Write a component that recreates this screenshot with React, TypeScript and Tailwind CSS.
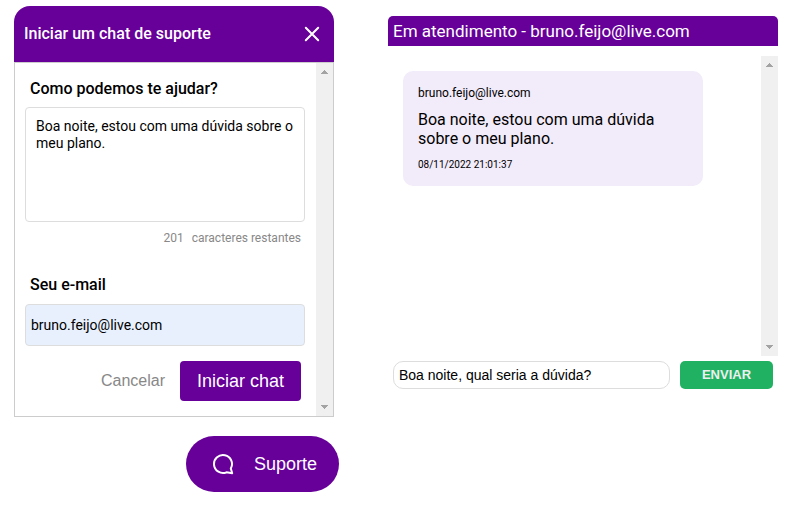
import React, { useState } from "react";

function ScrollTrack() {
  return (
    <div
      aria-hidden="true"
      className="flex w-[17px] shrink-0 flex-col items-center justify-between bg-[#f0f0f0] py-[7px]"
    >
      <svg width="7" height="4" viewBox="0 0 7 4" fill="#a3a3a3" shapeRendering="crispEdges">
        <path d="M3 0h1v1h1v1h1v1h1v1H0V3h1V2h1V1h1z" />
      </svg>
      <svg width="7" height="4" viewBox="0 0 7 4" fill="#a3a3a3" shapeRendering="crispEdges">
        <path d="M0 0h7v1H6v1H5v1H4v1H3V3H2V2H1V1H0z" />
      </svg>
    </div>
  );
}

function SupportForm() {
  const [message, setMessage] = useState("Boa noite, estou com uma dúvida sobre o meu plano.");
  const [email, setEmail] = useState("bruno.feijo@live.com");

  return (
    <section className="w-80">
      <header className="flex h-14 items-center justify-between rounded-t-2xl bg-[#660099] pr-[14px] pl-[10px] text-white">
        <h2 className="text-[16px] font-medium">Iniciar um chat de suporte</h2>
        <button type="button" aria-label="Fechar">
          <svg width="16" height="16" viewBox="0 0 16 16" fill="none" stroke="currentColor" strokeWidth="2" strokeLinecap="round">
            <path d="M1.8 1.8l12.4 12.4M14.2 1.8L1.8 14.2" />
          </svg>
        </button>
      </header>
      <form className="flex border border-[#cccccc]" onSubmit={(e) => e.preventDefault()}>
        <div className="flex flex-1 flex-col pt-4 pr-[11px] pb-[15px] pl-[10px]">
          <label htmlFor="question" className="pl-[5px] text-[16px] leading-5 font-medium">
            Como podemos te ajudar?
          </label>
          <textarea
            id="question"
            value={message}
            onChange={(e) => setMessage(e.target.value)}
            className="mt-2 h-[115px] resize-none rounded border border-[#dddddd] px-[10px] py-[10px] text-[14px] leading-[17px]"
          />
          <p className="mt-2 flex justify-end gap-2 pr-1 text-[12px] leading-4 text-[#888888]">
            <span>201</span>
            <span>caracteres restantes</span>
          </p>
          <label htmlFor="email" className="mt-[29px] pl-[5px] text-[16px] leading-5 font-medium">
            Seu e-mail
          </label>
          <input
            id="email"
            type="email"
            value={email}
            onChange={(e) => setEmail(e.target.value)}
            className="mt-[9px] h-[42px] rounded border border-[#dddddd] bg-[#e8f0fe] px-[5px] text-[14px]"
          />
          <div className="mt-[15px] flex justify-end gap-[15px] pr-1 font-['Liberation_Sans',Arial,sans-serif]">
            <button type="button" className="text-[16px] text-[#888888]">
              Cancelar
            </button>
            <button type="submit" className="h-10 w-[121px] rounded bg-[#660099] text-[18px] text-white">
              Iniciar chat
            </button>
          </div>
        </div>
        <ScrollTrack />
      </form>
    </section>
  );
}

function SupportButton() {
  return (
    <button
      type="button"
      className="flex h-14 items-center gap-5 rounded-full bg-[#660099] pr-[22px] pl-[26px] font-['Liberation_Sans',Arial,sans-serif] text-[18px] text-white"
    >
      <svg width="22" height="22" viewBox="0 0 22 22" fill="none" stroke="currentColor" strokeWidth="2" strokeLinejoin="round">
        <path d="M18.8 15.5A9 9 0 1 0 14.5 19.3L20.2 20.2Z" />
      </svg>
      Suporte
    </button>
  );
}

function Conversation() {
  const [reply, setReply] = useState("Boa noite, qual seria a dúvida?");

  return (
    <section className="min-w-0 flex-1">
      <header className="rounded-t-[5px] bg-[#660099] px-[5px] text-white">
        <h2 className="text-[17px] leading-[30px]">Em atendimento - bruno.feijo@live.com</h2>
      </header>
      <div className="mt-[10px] flex h-[300px] justify-between">
        <div className="p-[15px]">
          <article className="w-[300px] rounded-[10px] bg-[#f2ebfa] p-[15px]">
            <p className="text-[12px] leading-[14px]">bruno.feijo@live.com</p>
            <p className="mt-[10px] text-[16px] leading-[19px]">
              Boa noite, estou com uma dúvida sobre o meu plano.
            </p>
            <time className="mt-[10px] block text-[10px] leading-[13px]">08/11/2022 21:01:37</time>
          </article>
        </div>
        <ScrollTrack />
      </div>
      <form
        className="mt-[5px] flex gap-[10px] px-[5px] font-['Liberation_Sans',Arial,sans-serif]"
        onSubmit={(e) => e.preventDefault()}
      >
        <input
          type="text"
          aria-label="Mensagem"
          value={reply}
          onChange={(e) => setReply(e.target.value)}
          className="h-7 min-w-0 flex-1 rounded-[10px] border border-[#dddddd] px-[5px] text-[14px]"
        />
        <button type="submit" className="h-7 w-[93px] rounded-[5px] bg-[#20b262] text-[13px] font-bold text-[#eeeeee]">
          ENVIAR
        </button>
      </form>
    </section>
  );
}

export default function App() {
  return (
    <main className="flex items-start bg-white pt-[6px] pr-8 pl-[14px] font-[Roboto,sans-serif] text-black">
      <div className="flex w-[325px] shrink-0 flex-col gap-[19px]">
        <SupportForm />
        <div className="flex justify-end">
          <SupportButton />
        </div>
      </div>
      <div className="flex min-w-0 flex-1 pt-[10px] pl-[49px]">
        <Conversation />
      </div>
    </main>
  );
}
